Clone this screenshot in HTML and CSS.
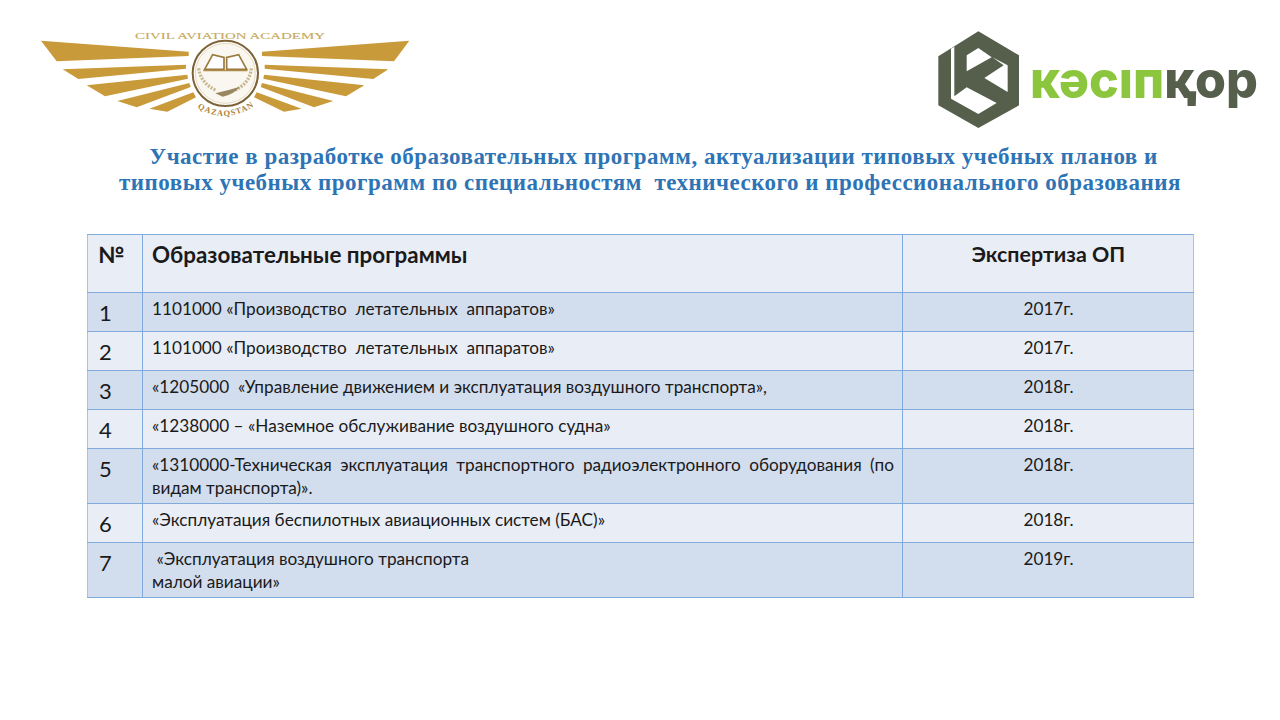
FILE: index.html
```html
<!DOCTYPE html>
<html lang="ru">
<head>
<meta charset="utf-8">
<title>Участие в разработке образовательных программ</title>
<link rel="stylesheet" href="styles.css">
</head>
<body>
<div class="slide">
  <header class="logos">
    <svg class="logo" width="400" height="100" viewBox="0 0 1200 300">
      <g fill="#c99a3a">
        <polygon points="33,62 476,95 476,108 80,124"/>
        <polygon points="98,148 468,134 468,146 145,177"/>
        <polygon points="170,196 472,164 474,176 225,229"/>
        <polygon points="262,243 478,189 482,201 320,262"/>
        <polygon points="358,266 490,217 498,232 412,275"/>
        <polygon points="1138,62 696,95 696,108 1092,124"/>
        <polygon points="1075,148 704,134 704,146 1030,177"/>
        <polygon points="1003,196 702,164 700,176 948,229"/>
        <polygon points="910,243 696,189 692,201 852,262"/>
        <polygon points="815,266 680,217 672,232 762,275"/>
      </g>
      <circle cx="586" cy="160" r="98" fill="#fff" stroke="#7d6238" stroke-width="6"/>
      <circle cx="586" cy="160" r="90" fill="#faf7f0" stroke="#d8c79c" stroke-width="2"/>
      <path d="M524,148 L548,104 L582,112 L582,148 Z M590,148 L590,112 L626,104 L650,148 Z" fill="#fff" stroke="#9a7a3e" stroke-width="5"/>
      <path d="M520,152 H652" stroke="#b08d48" stroke-width="4"/>
      <path d="M506,145 Q512,190 560,212 M664,145 Q660,190 612,212" fill="none" stroke="#c9b88f" stroke-width="10" stroke-dasharray="6 4"/>
      <path d="M556,220 Q590,212 630,200 Q610,224 578,230 Z" fill="#9a8760"/>
      <text class="logo-academy" x="315" y="56" textLength="570" lengthAdjust="spacingAndGlyphs">CIVIL AVIATION ACADEMY</text>
      <path id="qaz" d="M484,250 Q586,329 692,244" fill="none"/>
      <text class="logo-qaz"><textPath href="#qaz" startOffset="50%" text-anchor="middle">QAZAQSTAN</textPath></text>
    </svg>
    <svg class="logo" width="340" height="120" viewBox="0 0 1020 360">
      <g transform="translate(15 24)">
        <polygon fill="#565e4c" points="130,10 252,82 252,232 130,300 10,232 10,85 130,10"/>
        <polygon fill="#fff" points="48,62 58,56 58,205 95,178 185,225 130,258 48,212"/>
        <polygon fill="#fff" points="95,82 130,60 170,88 95,130"/>
        <polygon fill="#fff" points="172,88 218,112 218,192 148,150 206,112"/>
      </g>
      <text class="brand" x="300" y="235" textLength="684" lengthAdjust="spacingAndGlyphs"><tspan class="brand-green">кәсıп</tspan><tspan class="brand-dark">қор</tspan></text>
    </svg>
  </header>
  <h1 class="title"><span class="title-first">Участие в разработке образовательных программ, актуализации типовых учебных планов и</span><br>типовых учебных программ по специальностям&nbsp; технического и профессионального образования</h1>
  <table class="grid">
    <colgroup><col class="c1"><col class="c2"><col class="c3"></colgroup>
    <thead>
      <tr class="h58"><th>№</th><th class="left">Образовательные программы</th><th class="mid">Экспертиза ОП</th></tr>
    </thead>
    <tbody>
      <tr class="dark h39"><td class="num">1</td><td>1101000 «Производство&nbsp; летательных&nbsp; аппаратов»</td><td class="mid">2017г.</td></tr>
      <tr class="light h39"><td class="num">2</td><td>1101000 «Производство&nbsp; летательных&nbsp; аппаратов»</td><td class="mid">2017г.</td></tr>
      <tr class="dark h39"><td class="num">3</td><td>«1205000&nbsp; «Управление движением и эксплуатация воздушного транспорта»,</td><td class="mid">2018г.</td></tr>
      <tr class="light h39"><td class="num">4</td><td>«1238000 – «Наземное обслуживание воздушного судна»</td><td class="mid">2018г.</td></tr>
      <tr class="dark h55"><td class="num">5</td><td class="just">«1310000-Техническая эксплуатация транспортного радиоэлектронного оборудования (по видам транспорта)».</td><td class="mid">2018г.</td></tr>
      <tr class="light h39"><td class="num">6</td><td>«Эксплуатация беспилотных авиационных систем (БАС)»</td><td class="mid">2018г.</td></tr>
      <tr class="dark h55"><td class="num">7</td><td>&nbsp;«Эксплуатация воздушного транспорта<br>малой авиации»</td><td class="mid">2019г.</td></tr>
    </tbody>
  </table>
</div>
</body>
</html>
```
FILE: styles.css
```css
* { box-sizing: border-box; }
html, body { margin: 0; padding: 0; background: #fff; }
.slide { width: 1280px; height: 720px; overflow: hidden; padding-top: 20px; font-family: "Lato", "Liberation Sans", sans-serif; color: #1a1a1a; }
.logos { display: flex; justify-content: space-between; padding: 0 10px 0 30px; height: 120px; }
.logo { display: block; flex: none; }
.logo-academy { font: 400 27px "Liberation Serif", serif; stroke: #c8aa5e; stroke-width: 0.4px; fill: #c8aa5e; }
.logo-qaz { font: 700 25px "Liberation Serif", serif; fill: #a9823a; letter-spacing: 3px; }
.brand { font: 800 153px "Inter", sans-serif; }
.brand-green { fill: #8cc63f; }
.brand-dark { fill: #565e4c; }
.title { margin: 4px 0 0; padding-left: 20px; text-align: center; font: 700 23px/26px "Liberation Serif", serif; letter-spacing: 0.5px; color: #2e74b5; }
.title-first { padding-left: 7px; }
.grid { margin: 38px 0 0 87px; width: 1106px; border-collapse: collapse; table-layout: fixed; border-bottom: 1px solid #5f96d0; border-top: 1px solid #6c9fd6; }
.c1 { width: 55px; }
.c2 { width: 760px; }
.c3 { width: 291px; }
th, td { border: 1px solid #7faadb; padding: 4px 8px 0 9px; vertical-align: top; font-weight: 400; font-size: 17.2px; line-height: 23px; text-align: left; }
tr > :first-child { border-left: 1px solid #a8c4e4; }
tr > :last-child { border-right: 1px solid #a8c4e4; }
th { padding-top: 6px; font-size: 22.4px; font-weight: 700; background: #e9edf6; line-height: 28px; }
th.mid { padding-top: 5px; font-size: 21.4px; }
.h58 { height: 58px; }
.h39 { height: 39px; }
.h55 { height: 55px; }
.dark td { background: #d2ddee; }
.light td { background: #e9edf6; }
.num { font-size: 22px; padding-top: 6px; line-height: 28px; padding-left: 11px; }
th:first-child { padding-left: 10px; }
.mid { text-align: center; }
.just { text-align: justify; }
```
